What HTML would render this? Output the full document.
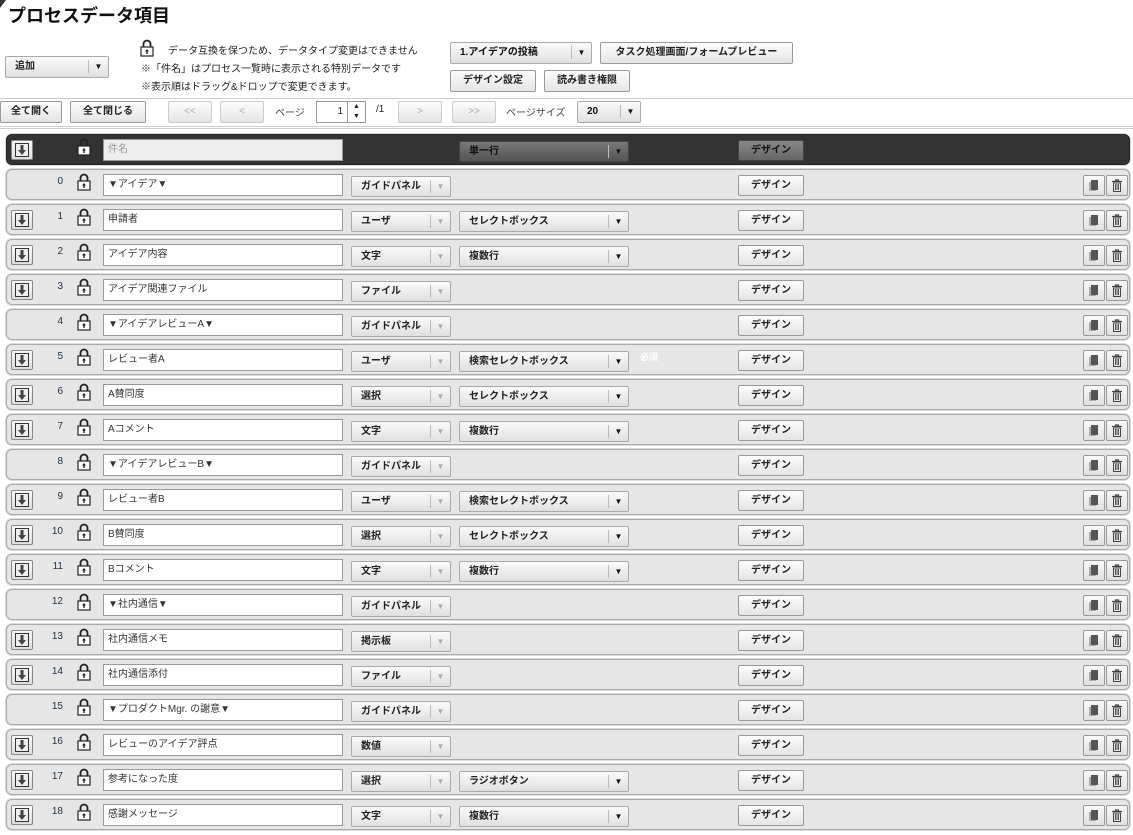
<!DOCTYPE html>
<html><head><meta charset="utf-8"><style>
*{box-sizing:border-box;margin:0;padding:0}
body{width:1133px;height:835px;background:#fff;font-family:"Liberation Sans","Noto Sans CJK JP",sans-serif;font-size:10px;color:#222;position:relative;overflow:hidden}
.a{position:absolute}
.btn{position:absolute;height:22px;border:1px solid #999;border-radius:2px;background:linear-gradient(#fdfdfd,#e4e4e4);font-weight:bold;font-size:10px;text-align:center;line-height:20px;color:#222}
.dis{color:#aaa;font-weight:normal;border-color:#ccc}
.row{position:absolute;left:6px;width:1124px;height:31px;border:1px solid #aaa;border-radius:6px;background:#e6e6e6;box-shadow:0 0 0 1px #ddd}
.row.h{background:#333;border-color:#222}
.dn{position:absolute;left:4px;top:5px;width:22px;height:20px;border:1px solid #888;border-radius:2px;background:linear-gradient(#fafafa,#ddd)}
.dn svg{position:absolute;left:3px;top:2px}
.num{position:absolute;right:1066px;top:6px;font-size:10px;color:#234}
.lk{position:absolute;left:70px;top:3px;width:14px;height:18px}
.in{position:absolute;left:96px;top:4px;width:240px;height:22px;border:1px solid #999;background:#fff;padding-left:4px;line-height:20px;font-size:10px;color:#333}
.sel{position:absolute;top:6px;height:21px;border:1px solid #aaa;border-radius:2px;background:linear-gradient(#fafafa,#e0e0e0);font-weight:bold;font-size:10px;line-height:19px;padding-left:9px;color:#222}
.sel b{position:absolute;right:0;top:3px;width:20px;height:13px;border-left:1px solid #bbb;text-align:center;font-size:8px;line-height:13px;color:#aaa}
.ty{left:344px;width:100px}
.sb{left:452px;width:170px}
.sb b{color:#111}
.ds{position:absolute;left:731px;top:5px;width:66px;height:21px;line-height:19px}
.cp{position:absolute;left:1076px;top:5px;width:22px;height:21px;border:1px solid #999;border-radius:2px;background:linear-gradient(#fafafa,#e0e0e0)}
.cp svg{position:absolute;left:4px;top:3px}
.tr{left:1099px}
.h .in{background:#eee;color:#999}
.h .sel{background:linear-gradient(#777,#555);border-color:#444;color:#111}
.h .btn{background:linear-gradient(#888,#666);border-color:#444;color:#111}
.sep{position:absolute;left:0;width:1133px;border-top:1px solid #ccc;border-bottom:1px solid #ccc;height:3px}
</style></head><body>
<svg width="0" height="0" style="position:absolute"><defs>
<symbol id="L" viewBox="0 0 14 18"><path d="M3.5 8V5a3.5 3.5 0 0 1 7 0v3" fill="none" stroke="#222" stroke-width="1.8"/><rect x="1" y="8" width="12" height="9" fill="#fff" stroke="#222" stroke-width="1.2"/><path d="M7 10l-2 2.5h1.3V15h1.4v-2.5H9z" fill="#222"/></symbol>
<symbol id="D" viewBox="0 0 14 14"><rect x="0.5" y="0.5" width="13" height="13" fill="#eee" stroke="#333"/><path d="M5.5 2h3v5h2.5L7 12 3 7h2.5z" fill="#444"/></symbol>
<symbol id="C" viewBox="0 0 12 13"><rect x="1" y="3" width="7" height="9" fill="#aaa"/><rect x="3" y="1" width="7" height="10" fill="#555"/></symbol>
<symbol id="T" viewBox="0 0 12 13"><path d="M1 2.5h10M4.5 2.5V1h3v1.5" stroke="#444" stroke-width="1.2" fill="none"/><path d="M2.5 4h7v8.5h-7z" fill="none" stroke="#444"/><path d="M4.5 5v6M6 5v6M7.5 5v6" stroke="#444" stroke-width="0.9"/></symbol>
</defs></svg>
<svg class="a" style="left:0;top:0" width="6" height="8"><path d="M0 0h6L0 8z" fill="#333"/></svg>
<div class="a" style="left:8px;top:2px;font-size:18px;font-weight:bold;color:#111">プロセスデータ項目</div>
<div class="sel" style="left:5px;top:56px;width:104px;height:22px;line-height:20px"><span>追加</span><b style="color:#111">▼</b></div>
<svg class="a" style="left:140px;top:39px" width="14" height="18"><use href="#L"/></svg>
<div class="a" style="left:168px;top:42px">データ互換を保つため、データタイプ変更はできません</div>
<div class="a" style="left:141px;top:60px">※「件名」はプロセス一覧時に表示される特別データです</div>
<div class="a" style="left:141px;top:78px">※表示順はドラッグ&amp;ドロップで変更できます。</div>
<div class="sel" style="left:450px;top:42px;width:142px;height:22px;line-height:20px;color:#111">1.アイデアの投稿<b style="color:#111">▼</b></div>
<div class="btn" style="left:600px;top:42px;width:193px">タスク処理画面/フォームプレビュー</div>
<div class="btn" style="left:450px;top:70px;width:86px">デザイン設定</div>
<div class="btn" style="left:544px;top:70px;width:86px">読み書き権限</div>
<div class="sep" style="top:98px;height:1px;border-bottom:none"></div>
<div class="btn" style="left:0;top:101px;width:62px">全て開く</div>
<div class="btn" style="left:70px;top:101px;width:76px">全て閉じる</div>
<div class="btn dis" style="left:168px;top:101px;width:44px">&lt;&lt;</div>
<div class="btn dis" style="left:220px;top:101px;width:44px">&lt;</div>
<div class="a" style="left:275px;top:104px;color:#444">ページ</div>
<div class="a" style="left:316px;top:101px;width:50px;height:22px;border:1px solid #999;background:#fff;text-align:right;padding-right:22px;line-height:20px">1</div>
<div class="a" style="left:347px;top:102px;width:18px;height:20px;border-left:1px solid #999;font-size:7px;line-height:10px;text-align:center">▲<br>▼</div>
<div class="a" style="left:376px;top:104px">/1</div>
<div class="btn dis" style="left:398px;top:101px;width:44px">&gt;</div>
<div class="btn dis" style="left:452px;top:101px;width:44px">&gt;&gt;</div>
<div class="a" style="left:506px;top:104px;color:#444">ページサイズ</div>
<div class="sel" style="left:577px;top:101px;width:64px;height:22px;line-height:20px;color:#111">20<b style="color:#111">▼</b></div>
<div class="sep" style="top:126px"></div>

<div class="row h" style="top:134px"><div class="dn"><svg width="14" height="14"><use href="#D"/></svg></div><svg class="lk"><use href="#L"/></svg><div class="in">件名</div><div class="sel sb">単一行<b>▼</b></div><div class="btn ds">デザイン</div></div>

<div class="row" style="top:169px"><span class="num">0</span><svg class="lk"><use href="#L"/></svg><div class="in">▼アイデア▼</div><div class="sel ty">ガイドパネル<b>▼</b></div><div class="btn ds">デザイン</div><div class="cp"><svg width="12" height="13"><use href="#C"/></svg></div><div class="cp tr"><svg width="12" height="13"><use href="#T"/></svg></div></div>
<div class="row" style="top:204px"><div class="dn"><svg width="14" height="14"><use href="#D"/></svg></div><span class="num">1</span><svg class="lk"><use href="#L"/></svg><div class="in">申請者</div><div class="sel ty">ユーザ<b>▼</b></div><div class="sel sb">セレクトボックス<b>▼</b></div><div class="btn ds">デザイン</div><div class="cp"><svg width="12" height="13"><use href="#C"/></svg></div><div class="cp tr"><svg width="12" height="13"><use href="#T"/></svg></div></div>
<div class="row" style="top:239px"><div class="dn"><svg width="14" height="14"><use href="#D"/></svg></div><span class="num">2</span><svg class="lk"><use href="#L"/></svg><div class="in">アイデア内容</div><div class="sel ty">文字<b>▼</b></div><div class="sel sb">複数行<b>▼</b></div><div class="btn ds">デザイン</div><div class="cp"><svg width="12" height="13"><use href="#C"/></svg></div><div class="cp tr"><svg width="12" height="13"><use href="#T"/></svg></div></div>
<div class="row" style="top:274px"><div class="dn"><svg width="14" height="14"><use href="#D"/></svg></div><span class="num">3</span><svg class="lk"><use href="#L"/></svg><div class="in">アイデア関連ファイル</div><div class="sel ty">ファイル<b>▼</b></div><div class="btn ds">デザイン</div><div class="cp"><svg width="12" height="13"><use href="#C"/></svg></div><div class="cp tr"><svg width="12" height="13"><use href="#T"/></svg></div></div>
<div class="row" style="top:309px"><span class="num">4</span><svg class="lk"><use href="#L"/></svg><div class="in">▼アイデアレビューA▼</div><div class="sel ty">ガイドパネル<b>▼</b></div><div class="btn ds">デザイン</div><div class="cp"><svg width="12" height="13"><use href="#C"/></svg></div><div class="cp tr"><svg width="12" height="13"><use href="#T"/></svg></div></div>
<div class="row" style="top:344px"><div class="dn"><svg width="14" height="14"><use href="#D"/></svg></div><span class="num">5</span><svg class="lk"><use href="#L"/></svg><div class="in">レビュー者A</div><div class="sel ty">ユーザ<b>▼</b></div><div class="sel sb">検索セレクトボックス<b>▼</b></div><span class="a" style="left:633px;top:5px;color:#fff;font-weight:bold;font-size:9px">必須</span><div class="btn ds">デザイン</div><div class="cp"><svg width="12" height="13"><use href="#C"/></svg></div><div class="cp tr"><svg width="12" height="13"><use href="#T"/></svg></div></div>
<div class="row" style="top:379px"><div class="dn"><svg width="14" height="14"><use href="#D"/></svg></div><span class="num">6</span><svg class="lk"><use href="#L"/></svg><div class="in">A賛同度</div><div class="sel ty">選択<b>▼</b></div><div class="sel sb">セレクトボックス<b>▼</b></div><div class="btn ds">デザイン</div><div class="cp"><svg width="12" height="13"><use href="#C"/></svg></div><div class="cp tr"><svg width="12" height="13"><use href="#T"/></svg></div></div>
<div class="row" style="top:414px"><div class="dn"><svg width="14" height="14"><use href="#D"/></svg></div><span class="num">7</span><svg class="lk"><use href="#L"/></svg><div class="in">Aコメント</div><div class="sel ty">文字<b>▼</b></div><div class="sel sb">複数行<b>▼</b></div><div class="btn ds">デザイン</div><div class="cp"><svg width="12" height="13"><use href="#C"/></svg></div><div class="cp tr"><svg width="12" height="13"><use href="#T"/></svg></div></div>
<div class="row" style="top:449px"><span class="num">8</span><svg class="lk"><use href="#L"/></svg><div class="in">▼アイデアレビューB▼</div><div class="sel ty">ガイドパネル<b>▼</b></div><div class="btn ds">デザイン</div><div class="cp"><svg width="12" height="13"><use href="#C"/></svg></div><div class="cp tr"><svg width="12" height="13"><use href="#T"/></svg></div></div>
<div class="row" style="top:484px"><div class="dn"><svg width="14" height="14"><use href="#D"/></svg></div><span class="num">9</span><svg class="lk"><use href="#L"/></svg><div class="in">レビュー者B</div><div class="sel ty">ユーザ<b>▼</b></div><div class="sel sb">検索セレクトボックス<b>▼</b></div><div class="btn ds">デザイン</div><div class="cp"><svg width="12" height="13"><use href="#C"/></svg></div><div class="cp tr"><svg width="12" height="13"><use href="#T"/></svg></div></div>
<div class="row" style="top:519px"><div class="dn"><svg width="14" height="14"><use href="#D"/></svg></div><span class="num">10</span><svg class="lk"><use href="#L"/></svg><div class="in">B賛同度</div><div class="sel ty">選択<b>▼</b></div><div class="sel sb">セレクトボックス<b>▼</b></div><div class="btn ds">デザイン</div><div class="cp"><svg width="12" height="13"><use href="#C"/></svg></div><div class="cp tr"><svg width="12" height="13"><use href="#T"/></svg></div></div>
<div class="row" style="top:554px"><div class="dn"><svg width="14" height="14"><use href="#D"/></svg></div><span class="num">11</span><svg class="lk"><use href="#L"/></svg><div class="in">Bコメント</div><div class="sel ty">文字<b>▼</b></div><div class="sel sb">複数行<b>▼</b></div><div class="btn ds">デザイン</div><div class="cp"><svg width="12" height="13"><use href="#C"/></svg></div><div class="cp tr"><svg width="12" height="13"><use href="#T"/></svg></div></div>
<div class="row" style="top:589px"><span class="num">12</span><svg class="lk"><use href="#L"/></svg><div class="in">▼社内通信▼</div><div class="sel ty">ガイドパネル<b>▼</b></div><div class="btn ds">デザイン</div><div class="cp"><svg width="12" height="13"><use href="#C"/></svg></div><div class="cp tr"><svg width="12" height="13"><use href="#T"/></svg></div></div>
<div class="row" style="top:624px"><div class="dn"><svg width="14" height="14"><use href="#D"/></svg></div><span class="num">13</span><svg class="lk"><use href="#L"/></svg><div class="in">社内通信メモ</div><div class="sel ty">掲示板<b>▼</b></div><div class="btn ds">デザイン</div><div class="cp"><svg width="12" height="13"><use href="#C"/></svg></div><div class="cp tr"><svg width="12" height="13"><use href="#T"/></svg></div></div>
<div class="row" style="top:659px"><div class="dn"><svg width="14" height="14"><use href="#D"/></svg></div><span class="num">14</span><svg class="lk"><use href="#L"/></svg><div class="in">社内通信添付</div><div class="sel ty">ファイル<b>▼</b></div><div class="btn ds">デザイン</div><div class="cp"><svg width="12" height="13"><use href="#C"/></svg></div><div class="cp tr"><svg width="12" height="13"><use href="#T"/></svg></div></div>
<div class="row" style="top:694px"><span class="num">15</span><svg class="lk"><use href="#L"/></svg><div class="in">▼プロダクトMgr. の謝意▼</div><div class="sel ty">ガイドパネル<b>▼</b></div><div class="btn ds">デザイン</div><div class="cp"><svg width="12" height="13"><use href="#C"/></svg></div><div class="cp tr"><svg width="12" height="13"><use href="#T"/></svg></div></div>
<div class="row" style="top:729px"><div class="dn"><svg width="14" height="14"><use href="#D"/></svg></div><span class="num">16</span><svg class="lk"><use href="#L"/></svg><div class="in">レビューのアイデア評点</div><div class="sel ty">数値<b>▼</b></div><div class="btn ds">デザイン</div><div class="cp"><svg width="12" height="13"><use href="#C"/></svg></div><div class="cp tr"><svg width="12" height="13"><use href="#T"/></svg></div></div>
<div class="row" style="top:764px"><div class="dn"><svg width="14" height="14"><use href="#D"/></svg></div><span class="num">17</span><svg class="lk"><use href="#L"/></svg><div class="in">参考になった度</div><div class="sel ty">選択<b>▼</b></div><div class="sel sb">ラジオボタン<b>▼</b></div><div class="btn ds">デザイン</div><div class="cp"><svg width="12" height="13"><use href="#C"/></svg></div><div class="cp tr"><svg width="12" height="13"><use href="#T"/></svg></div></div>
<div class="row" style="top:799px"><div class="dn"><svg width="14" height="14"><use href="#D"/></svg></div><span class="num">18</span><svg class="lk"><use href="#L"/></svg><div class="in">感謝メッセージ</div><div class="sel ty">文字<b>▼</b></div><div class="sel sb">複数行<b>▼</b></div><div class="btn ds">デザイン</div><div class="cp"><svg width="12" height="13"><use href="#C"/></svg></div><div class="cp tr"><svg width="12" height="13"><use href="#T"/></svg></div></div>
</body></html>
